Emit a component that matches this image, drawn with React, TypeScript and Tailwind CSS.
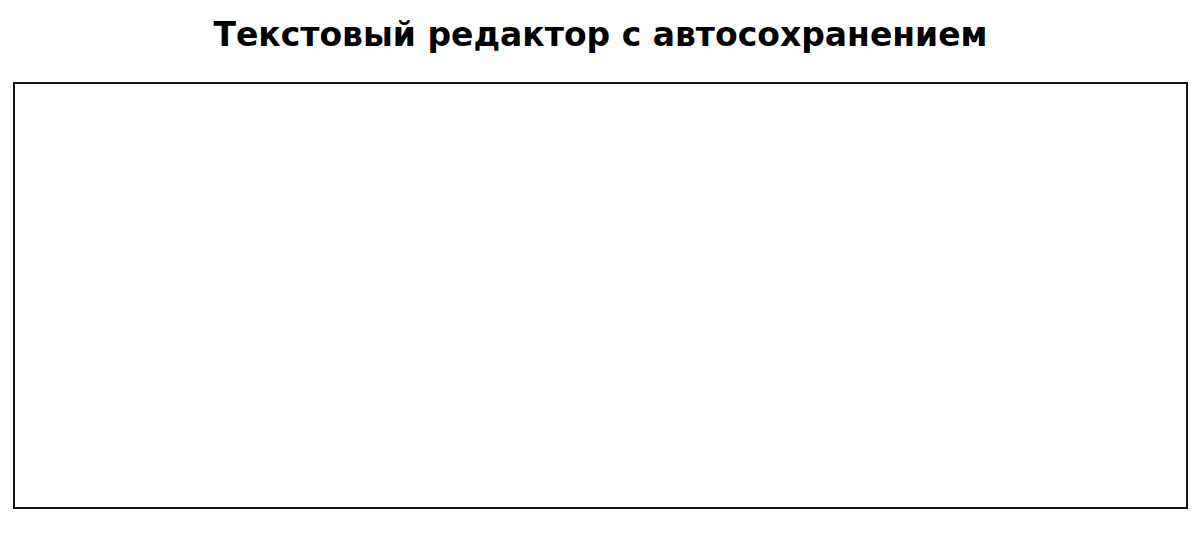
export default function App() {
  return (
    <div className="min-h-screen bg-white pl-[13px] pr-[12px] pt-[14px] font-['DejaVu_Sans',sans-serif] text-black">
      <h1 className="text-center text-[33px] font-bold leading-[42px]">
        Текстовый редактор с автосохранением
      </h1>
      <textarea
        className="mt-[26px] block h-[427px] w-full resize-none border-2 border-[#111] bg-white p-2 text-base outline-none"
        defaultValue=""
      />
    </div>
  );
}
